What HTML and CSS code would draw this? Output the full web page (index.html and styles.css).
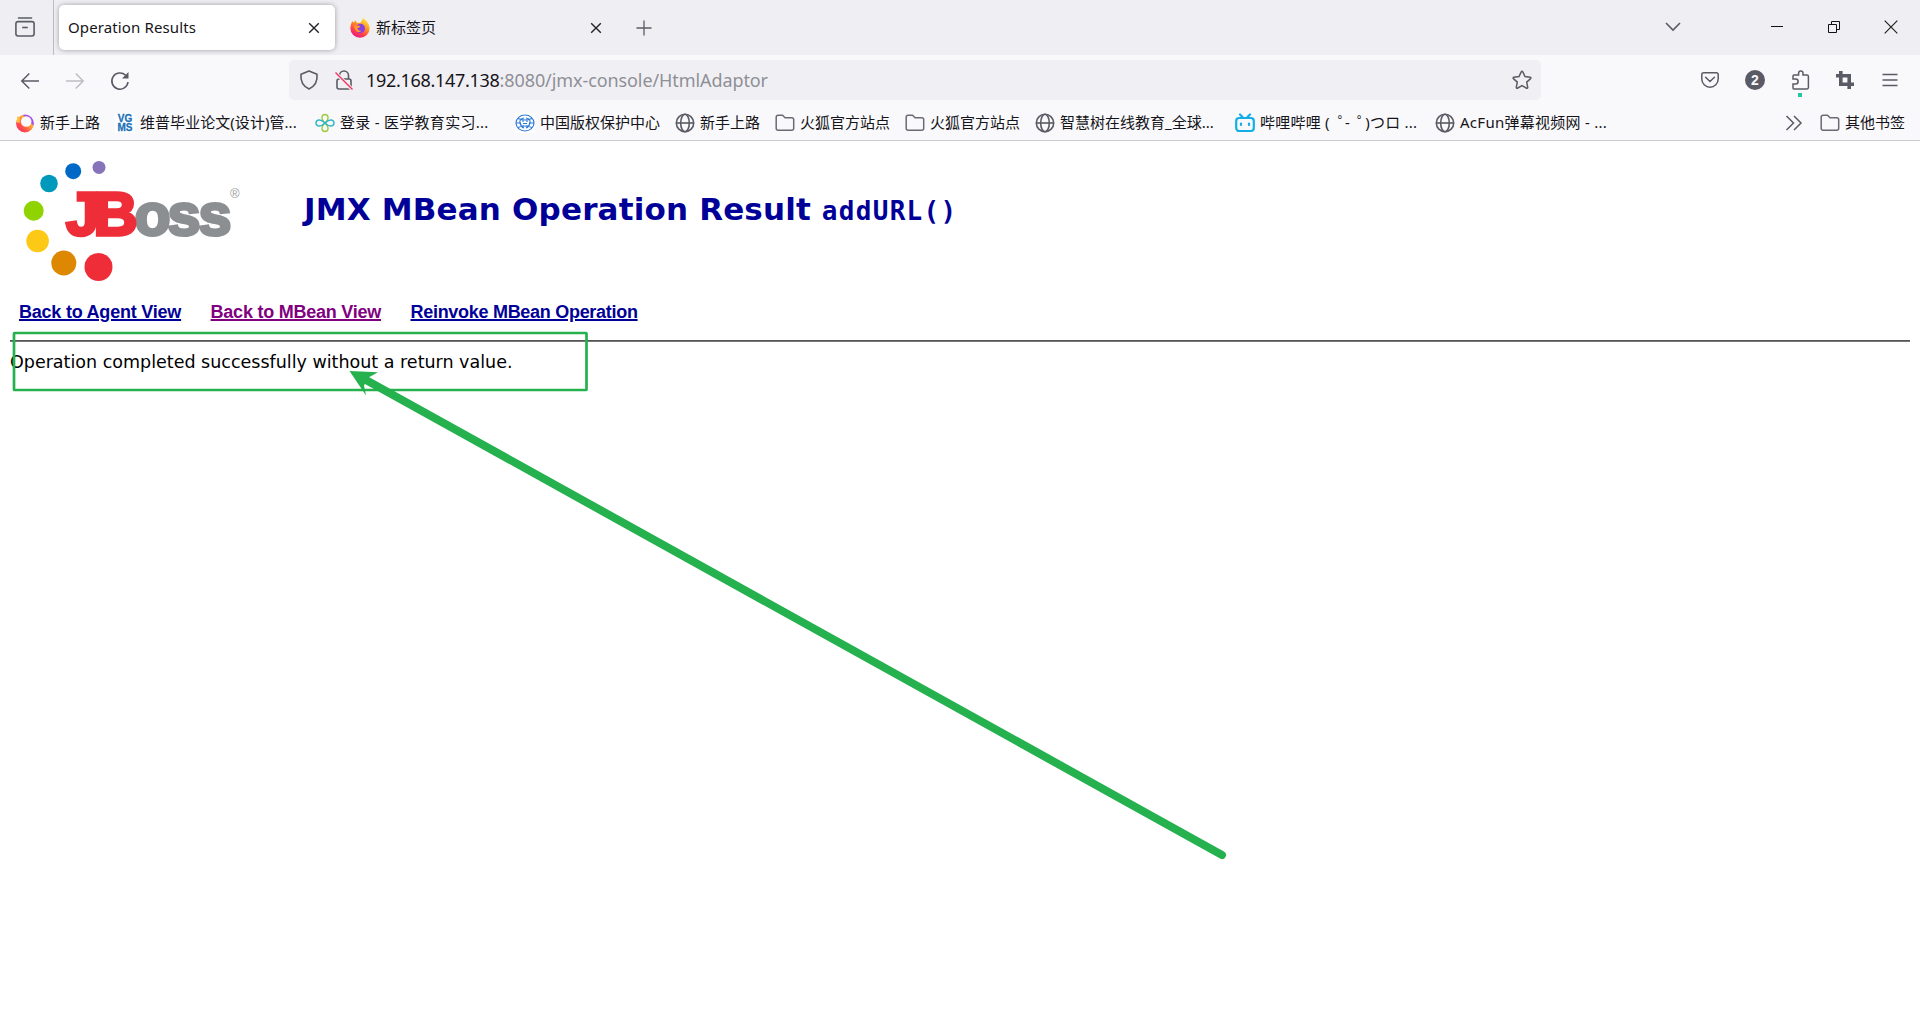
FILE: index.html
```html
<!DOCTYPE html>
<html lang="zh-CN">
<head>
<meta charset="utf-8">
<title>Operation Results</title>
<link rel="stylesheet" href="styles.css">
</head>
<body>
<svg class="defs" width="0" height="0">
  <symbol id="globe" viewBox="0 0 20 20"><g fill="none" stroke="#5b5b66" stroke-width="1.6"><circle cx="10" cy="10" r="8.7"/><ellipse cx="10" cy="10" rx="4.3" ry="8.7"/><path d="M1.3 10h17.4"/></g></symbol>
  <symbol id="folder" viewBox="0 0 20 20"><path d="M3.2 2.2h4.3l2.6 2.6h6.6q2 0 2 2v8.500q0 2-2 2H3.2q-2 0-2-2V4.200q0-2 2-2z" fill="none" stroke="#6a6a74" stroke-width="1.5"/></symbol>
  <symbol id="close" viewBox="0 0 12 12"><path d="M1.2 1.2l9.6 9.6M10.8 1.2L1.2 10.8" stroke="#222228" stroke-width="1.4"/></symbol>
</svg>
<header class="browser">
  <div class="tabs">
    <div class="view"><svg width="20" height="20" viewBox="0 0 20 20" fill="none" stroke="#5b5b66" stroke-width="1.6"><path d="M3.5 1h13" stroke-linecap="round"/><rect x=".9" y="4.6" width="18.2" height="14.4" rx="2.2"/><path d="M7.2 10.5h5.6"/></svg></div>
    <div class="tab active"><span class="tab-title t-op">Operation Results</span><svg width="12" height="12"><use href="#close"/></svg></div>
    <div class="tab"><svg class="fox" width="20" height="20" viewBox="0 0 20 20"><defs><linearGradient id="f" x1=".85" y1="0" x2=".3" y2="1"><stop offset="0" stop-color="#fff44f"/><stop offset=".4" stop-color="#ff9a1f"/><stop offset=".75" stop-color="#ff3b50"/><stop offset="1" stop-color="#e3168c"/></linearGradient></defs><path d="M13 0c3 2 6.600 6 6.600 10.500a9.600 9.300 0 0 1-19.200 0C.4 7 1.500 4.500 2.600 3l1 1.700L5.500 2.300 6.800 4.800 10.500 5C11 3 12.300 2.500 13 0z" fill="url(#f)"/><circle cx="10.400" cy="10.400" r="4.600" fill="#8a3fe0"/><path d="M4 7.500l6 .2c1 1-1 2.200-2.500 2.400 0 2.400 2.500 3 4 2.300-2 3.500-7 1.500-7.500-4.900z" fill="#ff9a2a"/></svg><span class="tab-title">新标签页</span><svg width="12" height="12"><use href="#close"/></svg></div>
    <svg class="plus" width="16" height="16" viewBox="0 0 16 16"><path d="M8 .5v15M.5 8h15" stroke="#5b5b66" stroke-width="1.3"/></svg>
    <div class="window">
      <svg width="18" height="12" viewBox="0 0 18 12"><path d="M2 2l7 7 7-7" fill="none" stroke="#5b5b66" stroke-width="1.6"/></svg>
      <svg class="min" width="12" height="12" viewBox="0 0 12 12"><path d="M0 5.500h12" stroke="#111" stroke-width="1"/></svg>
      <svg class="max" width="12" height="12" viewBox="0 0 12 12"><path d="M.5 3.500h8v8h-8zM3.500 3V.500h8v8H9" fill="none" stroke="#111"/></svg>
      <svg width="14" height="14" viewBox="0 0 14 14"><path d="M.7.700l12.600 12.600M13.300.700L.7 13.300" stroke="#222" stroke-width="1.200"/></svg>
    </div>
  </div>
  <div class="nav">
    <div class="nav-buttons">
      <svg width="20" height="18" viewBox="0 0 20 18" fill="none" stroke="#5b5b66" stroke-width="1.500"><path d="M19 9H2M9.300 1.500L1.800 9l7.500 7.500"/></svg>
      <svg width="20" height="18" viewBox="0 0 20 18" fill="none" stroke="#bdbdc3" stroke-width="1.500"><path d="M1 9h17M10.700 1.500L18.200 9l-7.500 7.500"/></svg>
      <svg width="20" height="20" viewBox="0 0 20 20"><path d="M18 11a8.100 8.100 0 1 1-2.500-6.800" fill="none" stroke="#5b5b66" stroke-width="1.600"/><path d="M18.500 1v6.500H12z" fill="#5b5b66"/></svg>
    </div>
    <div class="url">
      <svg width="20" height="20" viewBox="0 0 20 20"><path d="M10 1L18 4.300c.6 6-1.500 11.500-8 14.700C3.500 15.800 1.400 10.300 2 4.300z" fill="none" stroke="#5b5b66" stroke-width="1.600" stroke-linejoin="round"/></svg>
      <svg class="lock" width="20" height="20" viewBox="0 0 20 20" fill="none" stroke="#5b5b66" stroke-width="1.600"><rect x="3" y="9" width="14" height="10" rx="2"/><path d="M5.500 9V5.500a4.500 4.500 0 0 1 9 0V9"/><path d="M1.500 2.800l16.500 16.500" stroke="#f0f0f4" stroke-width="3.500"/><path d="M1.500 2.500l17 17" stroke="#f23b63" stroke-width="1.500"/></svg>
      <span class="addr"><span class="host">192.168.147.138</span><span class="path">:8080/jmx-console/HtmlAdaptor</span></span>
      <svg class="star" width="20" height="20" viewBox="0 0 20 20"><path d="M10 1.200q.5 0 .8.700l2.200 4.700 5.200.7q1.200.4.400 1.300l-3.900 3.500 1 5.300q0 1.200-1.100.8L10 15.700l-4.600 2.500q-1.100.4-1.100-.8l1-5.300L1.400 8.600q-.8-.9.400-1.300l5.200-.7 2.200-4.700q.3-.7.8-.7z" fill="none" stroke="#5b5b66" stroke-width="1.500"/></svg>
    </div>
    <div class="tools">
      <svg width="18" height="16" viewBox="0 0 18 16" fill="none" stroke="#5b5b66" stroke-width="1.500"><path d="M2.800.8h12.400q2 0 2 2V7a8.200 8.200 0 0 1-16.400 0V2.800q0-2 2-2z"/><path d="M4.600 5.300L9 9.500l4.400-4.200" stroke-linecap="round"/></svg>
      <span class="count">2</span>
      <span class="puzzle"><svg width="20" height="20" viewBox="0 0 20 20"><path d="M3.800 19q-.8 0-.8-1v-4h2.600a2.200 2.200 0 0 0 0-5H3V6q0-1 1-1h4.600V3.200a2.200 2.200 0 0 1 4.400 0V5h4q1.400 0 1.400 1.400V17.600q0 1.400-1.400 1.400z" fill="none" stroke="#5b5b66" stroke-width="1.500"/></svg><i class="dot"></i></span>
      <svg class="crop" width="18" height="18" viewBox="0 0 18 18" fill="none" stroke="#5b5b66" stroke-width="3.600"><path d="M4.800 0v13.200H18M0 4.800h13.200V18"/></svg>
      <svg class="menu" width="16" height="14" viewBox="0 0 16 14"><path d="M.5 1.500h15M.5 7h15M.5 12.500h15" stroke="#5b5b66" stroke-width="1.500"/></svg>
    </div>
  </div>
  <div class="bookmarks">
    <div class="bm w1"><svg width="20" height="20" viewBox="0 0 20 20"><defs><linearGradient id="r" x1="1" y1="0" x2="0" y2="1"><stop offset="0" stop-color="#8848f0"/><stop offset=".3" stop-color="#b04de0"/><stop offset=".35" stop-color="#ffb52e"/><stop offset=".65" stop-color="#ff5548"/><stop offset="1" stop-color="#f72270"/></linearGradient></defs><circle cx="10" cy="10.500" r="8.900" fill="url(#r)"/><circle cx="11.200" cy="8.500" r="5.300" fill="#f9f9fb"/><path d="M2.500 3l2.500 2-.5 5-3-1z" fill="#ffc23a"/></svg><span>新手上路</span></div>
    <div class="bm w2"><span class="vgms">VG<br>MS</span><span class="t2">维普毕业论文(设计)管...</span></div>
    <div class="bm w3"><svg width="20" height="20" viewBox="0 0 20 20" fill="none" stroke-width="1.400"><path d="M10 10C5 5 7 1.500 10 1.500S15 5 10 10C5 15 7 18.500 10 18.500S15 15 10 10" stroke="#9bcb3c"/><path d="M10 10C5 5 1 7 1 10s4 5 9 0c5-5 9-3 9 0s-4 5-9 0" stroke="#35b5c9"/></svg><span class="t3">登录 - 医学教育实习...</span></div>
    <div class="bm w4"><svg width="20" height="20" viewBox="0 0 20 20"><rect width="20" height="20" fill="#fff"/><g fill="none" stroke="#2a78d6" stroke-width="1.100"><ellipse cx="10" cy="10" rx="9" ry="8"/><path d="M1 10h5M14 10h5M3 5.500q7 3 14 0M3 14.500q7-3 14 0M9 5q-5 1-4 5t4 5M11 5q5 1 4 5t-4 5M8 7v2M12 7v2M8 12v2M12 12v2M8 10.500h4"/></g></svg><span>中国版权保护中心</span></div>
    <div class="bm w5"><svg width="20" height="20"><use href="#globe"/></svg><span>新手上路</span></div>
    <div class="bm w6"><svg width="20" height="20"><use href="#folder"/></svg><span>火狐官方站点</span></div>
    <div class="bm w6"><svg width="20" height="20"><use href="#folder"/></svg><span>火狐官方站点</span></div>
    <div class="bm w8"><svg width="20" height="20"><use href="#globe"/></svg><span>智慧树在线教育_全球...</span></div>
    <div class="bm w9"><svg width="20" height="20" viewBox="0 0 20 20" fill="none" stroke="#12aee5" stroke-width="2.200" stroke-linecap="round"><rect x="1.200" y="5" width="17.600" height="13" rx="3"/><path d="M5 1.500L7.500 4M15 1.500L12.500 4M6 10.500v1.500M14 10.500v1.500"/></svg><span class="t9">哔哩哔哩 (<b class="mark">゜</b>-<b class="mark">゜</b>)つロ ...</span></div>
    <div class="bm"><svg width="20" height="20"><use href="#globe"/></svg><span class="t10">AcFun弹幕视频网 - ...</span></div>
    <div class="bm other"><svg class="more" width="18" height="16" viewBox="0 0 18 16"><path d="M1.500 1l7 7-7 7M9 1l7 7-7 7" fill="none" stroke="#5b5b66" stroke-width="1.500"/></svg><svg width="20" height="20"><use href="#folder"/></svg><span>其他书签</span></div>
  </div>
</header>
<main class="page">
  <div class="banner">
    <svg class="logo" width="236" height="130" viewBox="10 155 236 130">
      <circle cx="99" cy="167.400" r="6.500" fill="#8673ba"/><circle cx="73.200" cy="171.200" r="8" fill="#0069c8"/><circle cx="49" cy="183.500" r="8.800" fill="#0099bb"/><circle cx="33.700" cy="210.700" r="10" fill="#8fd400"/><circle cx="37.600" cy="241" r="11.300" fill="#fcc917"/><circle cx="63.800" cy="263" r="12.500" fill="#de8703"/><circle cx="98.500" cy="267" r="14" fill="#ee2d38"/>
      <g class="oss"><text x="134.500" y="234.500" textLength="36" lengthAdjust="spacingAndGlyphs">o</text><text x="167.500" y="234.500" textLength="33" lengthAdjust="spacingAndGlyphs">s</text><text x="198.500" y="234.500" textLength="33" lengthAdjust="spacingAndGlyphs">s</text></g>
      <g class="jb"><text x="66" y="234.500" textLength="33" lengthAdjust="spacingAndGlyphs">J</text><text x="93.500" y="234.500" textLength="44" lengthAdjust="spacingAndGlyphs">B</text></g>
      <text class="reg" x="230" y="198">®</text>
    </svg>
    <h1><span class="h-main">JMX MBean Operation Result</span> <code>addURL()</code></h1>
  </div>
  <nav class="links"><a class="l1" href="#">Back to Agent View</a><a class="visited l2" href="#">Back to MBean View</a><a class="l3" href="#">Reinvoke MBean Operation</a></nav>
  <hr>
  <p class="result">Operation completed successfully without a return value.</p>
</main>
<svg class="annotation" width="1920" height="1013" viewBox="0 0 1920 1013">
  <rect x="14" y="333" width="572.500" height="57" rx=".5" fill="none" stroke="#24b14e" stroke-width="2.700"/>
  <path d="M366 380L1222 855" stroke="#24b14e" stroke-width="8" stroke-linecap="round"/>
  <path d="M349.500 371l28.500 1.200-9.500 5.300-4.500 8 2 10z" fill="#24b14e"/>
</svg>
</body>
</html>
```
FILE: styles.css
```css
* { box-sizing: border-box; }
body { margin: 0; background: #fff; overflow: hidden; font-family: "Noto Sans", "Noto Sans CJK SC", sans-serif; color: #15141a; }
svg { display: block; flex: none; }
.defs { position: absolute; }
.browser { height: 141px; background: #f9f9fb; border-bottom: 1px solid #ccccce; font-size: 15px; }
.tabs { height: 55px; background: #efeef3; display: flex; align-items: center; }
.view { width: 54px; height: 55px; border-right: 1px solid #bdbcc3; padding: 17px 0 0 15px; }
.tab { width: 276px; height: 45px; margin-left: 5px; display: flex; align-items: center; border-radius: 5px; padding: 0 15px 0 9px; }
.tab.active { background: #fff; box-shadow: 0 0 5px rgba(0,0,0,.35); }
.tab + .tab { margin-left: 6px; }
.tab-title { white-space: nowrap; line-height: 22px; padding-bottom: 2px; }
.t-op { letter-spacing: .12px; }
.tab-title + svg { margin-left: auto; }
.fox { margin-right: 6px; }
.plus { margin-left: 19px; }
.window { margin-left: auto; display: flex; align-items: center; padding: 0 22px 1px 0; }
.window .min { margin-left: 89px; }
.window .max { margin: 0 44px 0 45px; }
.nav { height: 50px; display: flex; align-items: center; }
.nav-buttons { width: 289px; display: flex; gap: 25px; align-items: center; padding: 1px 0 0 20px; }
.url { width: 1252px; height: 40px; background: #f0f0f4; border-radius: 5px; display: flex; align-items: center; padding: 0 9px 0 10px; font-size: 18px; }
.lock { margin: 0 12px 0 15px; }
.host { letter-spacing: -.3px; }
.path { color: #8f8f96; letter-spacing: -.09px; }
.addr { white-space: nowrap; line-height: 26px; }
.star { margin-left: auto; }
.tools { flex: 1; display: flex; align-items: center; padding-left: 160px; }
.count { width: 20px; height: 20px; margin: 0 25px 0 26px; border-radius: 50%; background: #5b5b66; color: #f9f9fb; font: bold 14px/20px "Liberation Sans", sans-serif; text-align: center; }
.crop { margin: 0 28px 0 26px; }
.puzzle { position: relative; }
.dot { position: absolute; left: 8px; top: 23px; width: 4px; height: 4px; background: #2ac3a2; }
.bookmarks { height: 35px; display: flex; align-items: center; padding: 0 15px; white-space: nowrap; line-height: 22px; }
.bm { display: flex; align-items: center; gap: 5px; flex: none; }
.bm > span { padding-bottom: 1px; }
.w1 { width: 100px; } .w2 { width: 200px; } .w3 { width: 200px; } .w4 { width: 160px; } .w5 { width: 100px; } .w6 { width: 130px; } .w8 { width: 200px; } .w9 { width: 200px; }
.t2 { letter-spacing: .05px; }
.t3 { letter-spacing: .28px; }
.t9 { letter-spacing: .22px; }
.t10 { letter-spacing: .27px; }
.mark { display: inline-block; font-weight: normal; transform: translateX(8px); }
.mark + .mark { transform: translateX(7px); }
.bm > .vgms { width: 20px; background: #fff; color: #1d72b8; font: bold 10px/9px "Liberation Sans", sans-serif; text-align: center; padding: 1px 0; -webkit-text-stroke: .3px #1d72b8; }
.other { margin-left: auto; }
.more { margin-right: 12px; }
.page { padding: 14px 10px 0; }
.banner { display: flex; align-items: flex-start; height: 130px; }
.logo text { font-family: "Liberation Sans", sans-serif; font-weight: bold; }
.oss { font-size: 60px; fill: #8b8f92; stroke: #8b8f92; stroke-width: 3.2px; }
.jb { font-size: 62px; fill: #ee2d38; stroke: #ee2d38; stroke-width: 3.5px; }
.logo .reg { font-size: 13px; font-weight: normal; fill: #999c9e; }
h1 { margin: 34px 0 0 58px; font: bold 31px/40px "DejaVu Sans", sans-serif; color: #000099; white-space: nowrap; }
.h-main { letter-spacing: .17px; }
code { font: bold 26px "DejaVu Sans Mono", monospace; letter-spacing: 1.3px; }
.links { margin-top: 16px; height: 22px; display: flex; gap: 29.5px; padding-left: 9px; font: bold 18px/22px "Liberation Sans", sans-serif; }
.links a { color: #000099; text-decoration-thickness: 2px; white-space: nowrap; }
.links .visited { color: #800080; }
.l1 { letter-spacing: -.22px; }
.l2 { letter-spacing: -.24px; }
.l3 { letter-spacing: -.29px; }
hr { height: 2px; border: 0; background: linear-gradient(#555 50%, #777 50%); margin: 17px 0 0; }
.result { margin: 9px 0 0; font: 17.500px/22px "DejaVu Sans", sans-serif; color: #000; }
.annotation { position: absolute; left: 0; top: 0; }
```
